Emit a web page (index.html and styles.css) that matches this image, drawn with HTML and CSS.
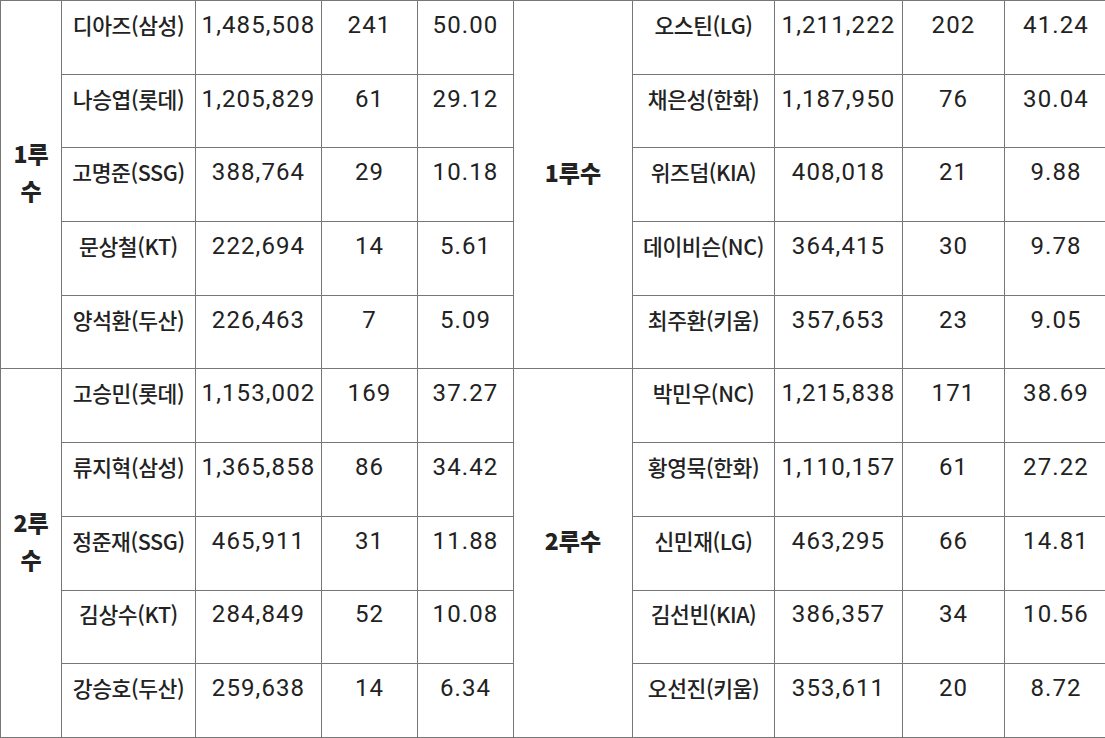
FILE: index.html
```html
<!DOCTYPE html>
<html lang="ko">
<head>
<meta charset="utf-8">
<link rel="stylesheet" href="styles.css">
</head>
<body>
<table class="vote">
<colgroup>
<col class="c-pos"><col class="c-name"><col class="c-votes"><col class="c-cnt"><col class="c-pct">
<col class="c-pos2"><col class="c-name2"><col class="c-votes2"><col class="c-cnt2"><col class="c-pct2">
</colgroup>
<tbody>
<tr>
<td class="pos" rowspan="5">1루수</td>
<td class="name">디아즈(삼성)</td><td class="num">1,485,508</td><td class="num">241</td><td class="num">50.00</td>
<td class="pos wide" rowspan="5">1루수</td>
<td class="name">오스틴(LG)</td><td class="num">1,211,222</td><td class="num">202</td><td class="num">41.24</td>
</tr>
<tr>
<td class="name">나승엽(롯데)</td><td class="num">1,205,829</td><td class="num">61</td><td class="num">29.12</td>
<td class="name">채은성(한화)</td><td class="num">1,187,950</td><td class="num">76</td><td class="num">30.04</td>
</tr>
<tr>
<td class="name">고명준(SSG)</td><td class="num">388,764</td><td class="num">29</td><td class="num">10.18</td>
<td class="name">위즈덤(KIA)</td><td class="num">408,018</td><td class="num">21</td><td class="num">9.88</td>
</tr>
<tr>
<td class="name">문상철(KT)</td><td class="num">222,694</td><td class="num">14</td><td class="num">5.61</td>
<td class="name">데이비슨(NC)</td><td class="num">364,415</td><td class="num">30</td><td class="num">9.78</td>
</tr>
<tr>
<td class="name">양석환(두산)</td><td class="num">226,463</td><td class="num">7</td><td class="num">5.09</td>
<td class="name">최주환(키움)</td><td class="num">357,653</td><td class="num">23</td><td class="num">9.05</td>
</tr>
<tr>
<td class="pos" rowspan="5">2루수</td>
<td class="name">고승민(롯데)</td><td class="num">1,153,002</td><td class="num">169</td><td class="num">37.27</td>
<td class="pos wide" rowspan="5">2루수</td>
<td class="name">박민우(NC)</td><td class="num">1,215,838</td><td class="num">171</td><td class="num">38.69</td>
</tr>
<tr>
<td class="name">류지혁(삼성)</td><td class="num">1,365,858</td><td class="num">86</td><td class="num">34.42</td>
<td class="name">황영묵(한화)</td><td class="num">1,110,157</td><td class="num">61</td><td class="num">27.22</td>
</tr>
<tr>
<td class="name">정준재(SSG)</td><td class="num">465,911</td><td class="num">31</td><td class="num">11.88</td>
<td class="name">신민재(LG)</td><td class="num">463,295</td><td class="num">66</td><td class="num">14.81</td>
</tr>
<tr>
<td class="name">김상수(KT)</td><td class="num">284,849</td><td class="num">52</td><td class="num">10.08</td>
<td class="name">김선빈(KIA)</td><td class="num">386,357</td><td class="num">34</td><td class="num">10.56</td>
</tr>
<tr>
<td class="name">강승호(두산)</td><td class="num">259,638</td><td class="num">14</td><td class="num">6.34</td>
<td class="name">오선진(키움)</td><td class="num">353,611</td><td class="num">20</td><td class="num">8.72</td>
</tr>
</tbody>
</table>
</body>
</html>
```
FILE: styles.css
```css
html, body {
  margin: 0;
  padding: 0;
  background: #fff;
  overflow: hidden;
}

.vote {
  border-collapse: collapse;
  table-layout: fixed;
  width: 1107px;
  color: #222;
}

.c-pos { width: 61px; }
.c-name { width: 134px; }
.c-votes { width: 126px; }
.c-cnt { width: 96px; }
.c-pct { width: 96px; }
.c-pos2 { width: 119px; }
.c-name2 { width: 142px; }
.c-votes2 { width: 128px; }
.c-cnt2 { width: 102px; }
.c-pct2 { width: 103px; }

.vote tr {
  height: 73.7px;
}

.vote td {
  border: 1px solid #777;
  padding: 0 2px 25px;
  text-align: center;
  vertical-align: middle;
  white-space: nowrap;
  overflow: hidden;
}

.name {
  font-family: "Noto Sans CJK KR", Roboto, sans-serif;
  font-weight: 500;
  font-size: 21.5px;
  line-height: 28px;
  letter-spacing: -0.4px;
}

.num {
  font-family: Roboto, "Noto Sans CJK KR", sans-serif;
  font-size: 24px;
  line-height: 28px;
  letter-spacing: 1.1px;
}

.vote td.pos {
  font-family: "Noto Sans CJK KR", sans-serif;
  font-weight: 900;
  font-size: 23px;
  line-height: 37px;
  white-space: normal;
  word-break: break-all;
  padding: 0 8px 25px;
}

.vote td.pos.wide {
  white-space: nowrap;
  padding: 0 2px 25px;
}
```
